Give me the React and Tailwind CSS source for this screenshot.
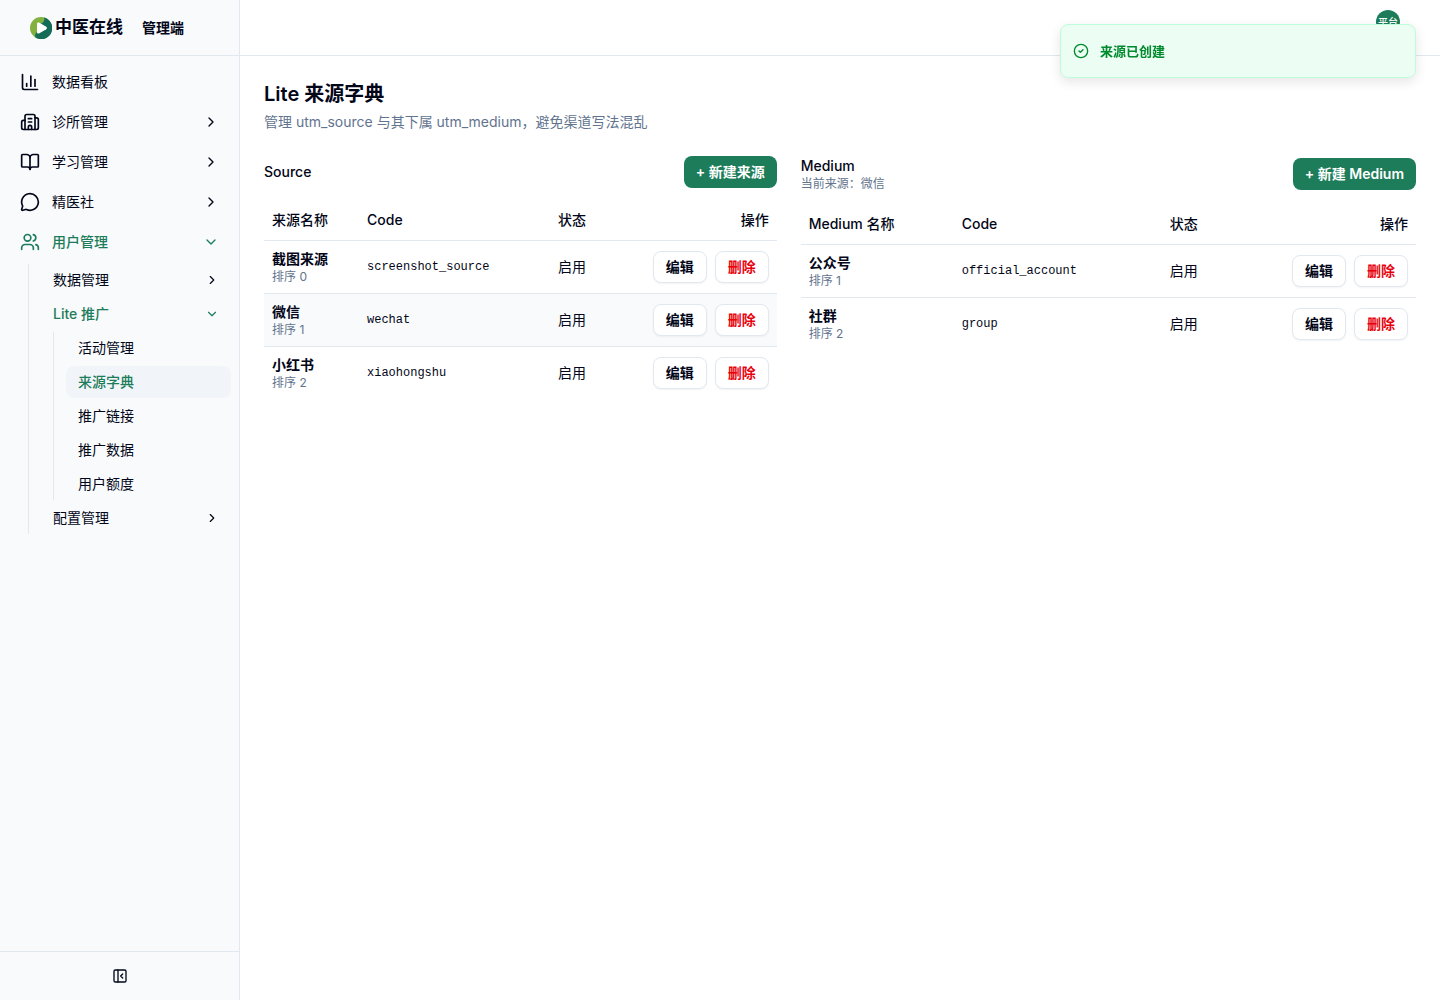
import React, { useState } from 'react';
import {
  BookOpen,
  Building2,
  ChartColumn,
  ChevronDown,
  ChevronRight,
  CircleCheck,
  MessageCircle,
  PanelLeftClose,
  Users,
} from 'lucide-react';

const menu = [
  { title: '数据看板', icon: ChartColumn },
  { title: '诊所管理', icon: Building2, children: [] },
  { title: '学习管理', icon: BookOpen, children: [] },
  { title: '精医社', icon: MessageCircle, children: [] },
  {
    title: '用户管理',
    icon: Users,
    open: true,
    children: [
      { title: '数据管理', children: [] },
      {
        title: 'Lite 推广',
        open: true,
        children: [
          { title: '活动管理' },
          { title: '来源字典', active: true },
          { title: '推广链接' },
          { title: '推广数据' },
          { title: '用户额度' },
        ],
      },
      { title: '配置管理', children: [] },
    ],
  },
];

const sources = [
  { name: '截图来源', sort: 0, code: 'screenshot_source' },
  { name: '微信', sort: 1, code: 'wechat' },
  { name: '小红书', sort: 2, code: 'xiaohongshu' },
];

const mediums = [
  { name: '公众号', sort: 1, code: 'official_account' },
  { name: '社群', sort: 2, code: 'group' },
];

const Logo = () => (
  <svg viewBox="0 0 22 22" className="size-[22px]" aria-hidden="true">
    <circle cx="11" cy="11" r="11" fill="#82b140" />
    <path d="M14 .5A11 11 0 1 1 5.500 20.500C4.600 18 5.500 16 7 15L7.500 8C12 7 15.500 4 14 .5Z" fill="#146c58" />
    <path d="M7 6.800c0-1.100 1-1.700 2-1.200l7.200 4.200c1 .600 1 1.800 0 2.400L9 16.400c-1 .500-2-.100-2-1.200Z" fill="#fff" />
  </svg>
);

// Sub menu entries, second and third level
const SubItem = ({ item }) => {
  const [open, setOpen] = useState(!!item.open);
  const Chevron = open ? ChevronDown : ChevronRight;

  if (!item.children) {
    return (
      <li>
        <a
          href="#"
          className={`flex h-8 items-center rounded-lg px-3 ${item.active ? 'bg-slate-100 font-medium text-[#1d7c59]' : ''}`}
        >
          {item.title}
        </a>
      </li>
    );
  }

  return (
    <li>
      <button
        type="button"
        onClick={() => setOpen(!open)}
        className={`flex h-8 w-full items-center justify-between rounded-lg px-3 ${open ? 'font-medium text-[#1d7c59]' : ''}`}
      >
        {item.title}
        <Chevron className="size-3.5" />
      </button>
      {open && item.children.length > 0 && (
        <ul className="mt-0.5 ml-3 flex flex-col gap-0.5 border-l border-slate-200 pl-3">
          {item.children.map((child) => (
            <SubItem key={child.title} item={child} />
          ))}
        </ul>
      )}
    </li>
  );
};

const MenuItem = ({ item }) => {
  const [open, setOpen] = useState(!!item.open);
  const Icon = item.icon;
  const Chevron = open ? ChevronDown : ChevronRight;

  return (
    <li>
      <button
        type="button"
        onClick={() => setOpen(!open)}
        className={`flex h-9 w-full items-center gap-3 rounded-lg px-3 ${open && item.children ? 'font-medium text-[#1d7c59]' : ''}`}
      >
        <Icon className="size-5" />
        <span className="flex-1 text-left">{item.title}</span>
        {item.children && <Chevron className="size-4" />}
      </button>
      {open && item.children?.length > 0 && (
        <ul className="mt-1 ml-5 flex flex-col gap-0.5 border-l border-slate-200 pl-3">
          {item.children.map((child) => (
            <SubItem key={child.title} item={child} />
          ))}
        </ul>
      )}
    </li>
  );
};

const DictTable = ({ nameLabel, rows, selected, onSelect, cols }) => (
  <table className="w-full table-fixed text-left">
    <thead>
      <tr className="border-b border-slate-200">
        <th className={`h-10 px-2 font-medium ${cols[0]}`}>{nameLabel}</th>
        <th className={`px-2 font-medium ${cols[1]}`}>Code</th>
        <th className="px-2 font-medium">状态</th>
        <th className="w-[148px] px-2 text-right font-medium">操作</th>
      </tr>
    </thead>
    <tbody>
      {rows.map((row) => (
        <tr
          key={row.code}
          onClick={() => onSelect?.(row.code)}
          className={`border-b border-slate-200 last:border-0 ${selected === row.code ? 'bg-slate-50' : ''}`}
        >
          <td className="p-2">
            <div className="font-semibold">{row.name}</div>
            <div className="text-xs text-slate-500">排序 {row.sort}</div>
          </td>
          <td className="p-2 font-['Liberation_Mono',monospace] text-xs">{row.code}</td>
          <td className="p-2">启用</td>
          <td className="p-2">
            <div className="flex justify-end gap-2">
              <button type="button" className="h-8 rounded-lg border border-slate-200 bg-white px-3 font-semibold shadow-xs">
                编辑
              </button>
              <button type="button" className="h-8 rounded-lg border border-slate-200 bg-white px-3 font-semibold text-red-600 shadow-xs">
                删除
              </button>
            </div>
          </td>
        </tr>
      ))}
    </tbody>
  </table>
);

const App = () => {
  const [source, setSource] = useState('wechat');
  const current = sources.find((s) => s.code === source);

  return (
    <div className="flex min-h-screen bg-white font-['Inter','Noto_Sans_CJK_SC',sans-serif] text-sm text-slate-950">
      {/* Sidebar */}
      <aside className="flex w-60 shrink-0 flex-col border-r border-slate-200 bg-slate-50">
        <div className="flex h-14 items-center border-b border-slate-200 pl-[30px]">
          <Logo />
          <span className="ml-[3px] text-[17px] font-semibold">中医在线</span>
          <span className="ml-[19px] font-semibold">管理端</span>
        </div>
        <nav className="flex-1 p-2">
          <ul className="flex flex-col gap-1">
            {menu.map((item) => (
              <MenuItem key={item.title} item={item} />
            ))}
          </ul>
        </nav>
        <div className="flex h-[49px] items-center justify-center border-t border-slate-200">
          <button type="button" aria-label="收起侧边栏" className="p-2">
            <PanelLeftClose className="size-4" />
          </button>
        </div>
      </aside>

      <div className="flex min-w-0 flex-1 flex-col">
        <header className="flex h-14 items-start justify-end border-b border-slate-200 pt-[10px] pr-10">
          <button
            type="button"
            className="flex size-6 items-center justify-center rounded-full bg-[#1d7c59] text-[10px] font-medium text-white"
          >
            平台
          </button>
        </header>

        <main className="p-6">
          <h1 className="text-xl font-semibold">Lite 来源字典</h1>
          <p className="mt-1 text-slate-500">管理 utm_source 与其下属 utm_medium，避免渠道写法混乱</p>

          <div className="mt-6 grid grid-cols-[5fr_6fr] items-start gap-6">
            {/* Sources */}
            <section>
              <div className="mb-3 flex items-center justify-between">
                <h2 className="font-medium">Source</h2>
                <button type="button" className="h-8 rounded-lg bg-[#1d7c59] px-3 font-semibold text-white">
                  + 新建来源
                </button>
              </div>
              <DictTable
                nameLabel="来源名称"
                rows={sources}
                selected={source}
                onSelect={setSource}
                cols={['w-[95px]', 'w-[191px]']}
              />
            </section>

            {/* Mediums of the selected source */}
            <section>
              <div className="mb-3 flex items-center justify-between">
                <div>
                  <h2 className="font-medium">Medium</h2>
                  <p className="text-xs text-slate-500">当前来源：{current.name}</p>
                </div>
                <button type="button" className="h-8 rounded-lg bg-[#1d7c59] px-3 font-semibold text-white">
                  + 新建 Medium
                </button>
              </div>
              <DictTable nameLabel="Medium 名称" rows={mediums} cols={['w-[153px]', 'w-[208px]']} />
            </section>
          </div>
        </main>
      </div>

      {/* Toast */}
      <div
        role="status"
        className="fixed top-6 right-6 flex h-[54px] w-[356px] items-center gap-[11px] rounded-lg border border-[#bffcd9] bg-[#ecfdf3] pl-3 text-[13px] font-semibold text-[#008a2e] shadow-[0_4px_12px_rgba(0,0,0,0.1)]"
      >
        <CircleCheck className="size-4" />
        来源已创建
      </div>
    </div>
  );
};

export default App;
